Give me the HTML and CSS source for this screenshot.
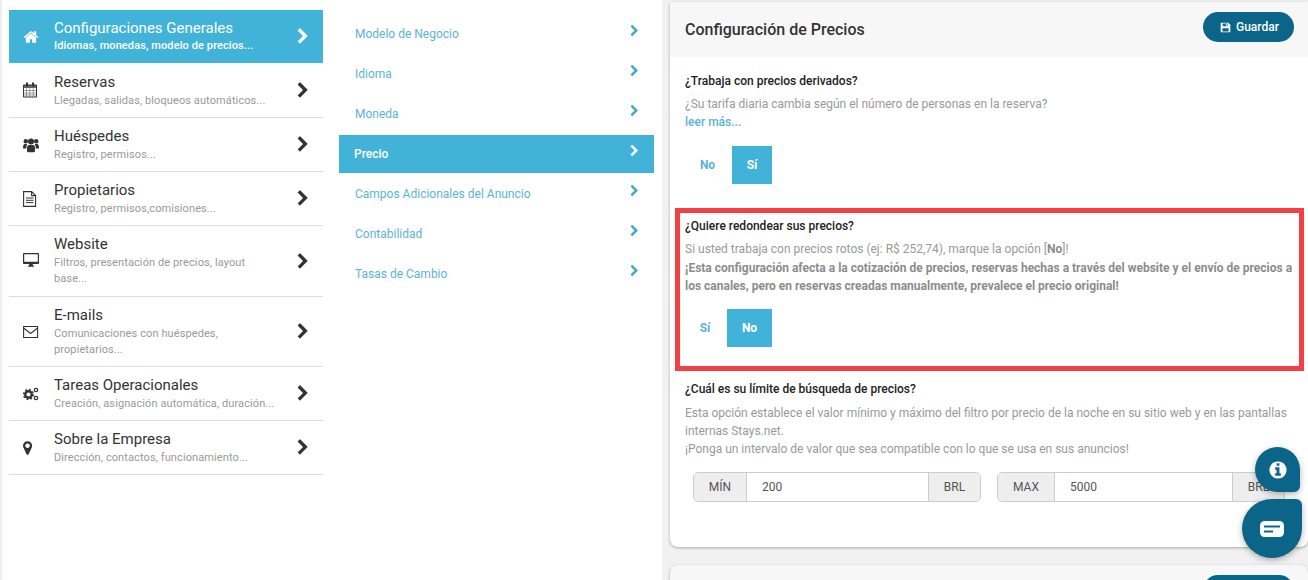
FILE: index.html
```html
<!DOCTYPE html>
<html lang="es">
<head>
<meta charset="utf-8">
<title>Configuración de Precios</title>
<link rel="stylesheet" href="styles.css">
</head>
<body>
<svg class="defs" width="0" height="0">
  <symbol id="chev" viewBox="0 0 1280 1792"><path d="M1107 877l-742 742q-19 19-45 19t-45-19l-166-166q-19-19-19-45t19-45l531-531-531-531q-19-19-19-45t19-45l166-166q19-19 45-19t45 19l742 742q19 19 19 45t-19 45z"/></symbol>
</svg>

<div class="page">
<div class="menus">
  <ul class="mainmenu">
    <li class="on">
      <svg class="ico" viewBox="0 0 1792 1792"><path d="M1472 992v480q0 26-19 45t-45 19h-384v-384h-256v384h-384q-26 0-45-19t-19-45v-480q0-1 .5-3t.5-3l575-474 575 474q1 2 1 6zm223-69l-62 74q-8 9-21 11h-3q-13 0-21-7l-692-577-692 577q-12 8-24 7-13-2-21-11l-62-74q-8-10-7-23.500t11-21.500l719-599q32-26 76-26t76 26l244 204v-195q0-14 9-23t23-9h192q14 0 23 9t9 23v408l219 182q10 8 11 21.500t-7 23.500z"/></svg>
      <div class="txt"><b>Configuraciones Generales</b><span>Idiomas, monedas, modelo de precios...</span></div>
      <svg class="chev"><use href="#chev"/></svg>
    </li>
    <li>
      <svg class="ico" viewBox="0 0 16 16"><path d="M.5 3h13v12H.5z" fill="none" stroke="#333" stroke-width="1"/><path d="M.5 3h13v3H.5z" fill-opacity=".75"/><path d="M3 .5h2v4H3zM9 .5h2v4H9z"/><path d="M.5 8.500h13M.5 11h13M.5 13h13M3.500 6v9M6.800 6v9M10.200 6v9" fill="none" stroke="#554466" stroke-width=".5"/></svg>
      <div class="txt"><b>Reservas</b><span>Llegadas, salidas, bloqueos automáticos...</span></div>
      <svg class="chev"><use href="#chev"/></svg>
    </li>
    <li>
      <svg class="ico" viewBox="0 0 16 16"><circle cx="2.800" cy="4.200" r="2.200"/><circle cx="13.200" cy="4.200" r="2.200"/><circle cx="8" cy="4.500" r="3"/><path d="M0 10.500q0-3.500 2-3.500h2.200q-1 1.500-1 4.500H0zM16 10.500q0-3.500-2-3.500h-2.200q1 1.500 1 4.500H16zM4 14.200v-3.200q0-3 2.300-3h3.400q2.300 0 2.300 3v3.200q0 1-1.200 1H5.200q-1.200 0-1.200-1z"/></svg>
      <div class="txt"><b>Huéspedes</b><span>Registro, permisos...</span></div>
      <svg class="chev"><use href="#chev"/></svg>
    </li>
    <li>
      <svg class="ico" viewBox="0 0 16 16"><path d="M.6 .6h8l4 4v10.800H.6z M8.600 .6v4h4" fill="none" stroke="#333" stroke-width="1.100"/><path d="M3 7h7.500M3 9.300h7.500M3 11.600h7.500" fill="none" stroke="#333"/></svg>
      <div class="txt"><b>Propietarios</b><span>Registro, permisos,comisiones...</span></div>
      <svg class="chev"><use href="#chev"/></svg>
    </li>
    <li class="two">
      <svg class="ico" viewBox="0 0 16 16"><path fill-rule="evenodd" d="M1 0h14q1 0 1 1v9q0 1-1 1H1q-1 0-1-1V1q0-1 1-1zm.2 1.200v7.600h13.600V1.200z"/><path d="M6.300 11h3.400l.4 1.800h1v1H4.900v-1h1z"/></svg>
      <div class="txt"><b>Website</b><span>Filtros, presentación de precios, layout base...</span></div>
      <svg class="chev"><use href="#chev"/></svg>
    </li>
    <li class="two">
      <svg class="ico" viewBox="0 0 16 16"><path d="M.6 2.500h14v11H.6z M.6 4l7 5.500L14.600 4" fill="none" stroke="#333" stroke-width="1.100"/></svg>
      <div class="txt"><b>E-mails</b><span>Comunicaciones con huéspedes, propietarios...</span></div>
      <svg class="chev"><use href="#chev"/></svg>
    </li>
    <li>
      <svg class="ico" viewBox="0 0 16 16"><circle cx="5.500" cy="8.500" r="3.300" fill="none" stroke="#333" stroke-width="2.400"/><circle cx="5.500" cy="8.500" r="5" fill="none" stroke="#333" stroke-width="1.400" stroke-dasharray="1.800 2.100"/><circle cx="13" cy="4" r="1.700" fill="none" stroke="#333" stroke-width="1.200"/><circle cx="13" cy="12" r="1.700" fill="none" stroke="#333" stroke-width="1.200"/></svg>
      <div class="txt"><b>Tareas Operacionales</b><span>Creación, asignación automática, duración...</span></div>
      <svg class="chev"><use href="#chev"/></svg>
    </li>
    <li>
      <svg class="ico" viewBox="0 0 1792 1792"><path d="M768 640q0-106-75-181t-181-75-181 75-75 181 75 181 181 75 181-75 75-181zm256 0q0 109-33 179l-364 774q-16 33-47.500 52t-67.500 19-67.500-19-46.500-52l-365-774q-33-70-33-179 0-212 150-362t362-150 362 150 150 362z"/></svg>
      <div class="txt"><b>Sobre la Empresa</b><span>Dirección, contactos, funcionamiento...</span></div>
      <svg class="chev"><use href="#chev"/></svg>
    </li>
  </ul>

  <ul class="submenu">
    <li>Modelo de Negocio<svg class="chev"><use href="#chev"/></svg></li>
    <li>Idioma<svg class="chev"><use href="#chev"/></svg></li>
    <li>Moneda<svg class="chev"><use href="#chev"/></svg></li>
    <li class="on">Precio<svg class="chev"><use href="#chev"/></svg></li>
    <li>Campos Adicionales del Anuncio<svg class="chev"><use href="#chev"/></svg></li>
    <li>Contabilidad<svg class="chev"><use href="#chev"/></svg></li>
    <li>Tasas de Cambio<svg class="chev"><use href="#chev"/></svg></li>
  </ul>
</div>

<div class="content">
  <div class="card">
    <div class="card-head">
      <h2>Configuración de Precios</h2>
      <a class="save">
        <svg viewBox="0 0 16 16"><path fill-rule="evenodd" d="M2 1h10l3 3v10q0 1-1 1H2q-1 0-1-1V2q0-1 1-1zm2 1.300V6h7V2.300zM3.500 9v4.700h9V9z"/><path d="M8.500 2.800h1.500v2.500H8.500z"/></svg>
        Guardar
      </a>
    </div>
    <div class="card-body">
      <section class="opt opt-first">
        <h3>¿Trabaja con precios derivados?</h3>
        <p>¿Su tarifa diaria cambia según el número de personas en la reserva?<br><a class="more">leer más...</a></p>
        <div class="toggle"><span class="no-first">No</span><span class="sel si-sel">Sí</span></div>
      </section>

      <section class="opt opt-round">
        <h3>¿Quiere redondear sus precios?</h3>
        <p>Si usted trabaja con precios rotos (ej: R$ 252,74), marque la opción [<strong>No</strong>]!<br>
        <strong>¡Esta configuración afecta a la cotización de precios, reservas hechas a través del website y el envío de precios a los canales, pero en reservas creadas manualmente, prevalece el precio original!</strong></p>
        <div class="toggle"><span class="si-first">Sí</span><span class="sel no-sel">No</span></div>
      </section>

      <section class="opt opt-limit">
        <h3>¿Cuál es su límite de búsqueda de precios?</h3>
        <p>Esta opción establece el valor mínimo y máximo del filtro por precio de la noche en su sitio web y en las pantallas internas Stays.net.<br>
        ¡Ponga un intervalo de valor que sea compatible con lo que se usa en sus anuncios!</p>
        <div class="ranges">
          <div class="range"><span class="addon lab">MÍN</span><span class="val">200</span><span class="addon cur">BRL</span></div>
          <div class="range"><span class="addon lab lab-max">MAX</span><span class="val">5000</span><span class="addon cur">BRL</span></div>
        </div>
      </section>
    </div>
  </div>

  <div class="card card-next">
    <a class="save save-next"></a>
  </div>
</div>
</div>

<div class="redbox"></div>

<a class="fab fab-info">
  <svg viewBox="0 0 1536 1792"><path fill="#fff" d="M1024 1376v-160q0-14-9-23t-23-9h-96v-512q0-14-9-23t-23-9h-320q-14 0-23 9t-9 23v160q0 14 9 23t23 9h96v320h-96q-14 0-23 9t-9 23v160q0 14 9 23t23 9h448q14 0 23-9t9-23zm-128-896v-160q0-14-9-23t-23-9h-192q-14 0-23 9t-9 23v160q0 14 9 23t23 9h192q14 0 23-9t9-23zm640 416q0 209-103 385.500t-279.500 279.500-385.500 103-385.500-103-279.500-279.500-103-385.500 103-385.500 279.500-279.500 385.500-103 385.500 103 279.500 279.500 103 385.500z"/></svg>
</a>
<a class="fab fab-chat">
  <svg viewBox="0 0 24 16"><path fill="#fff" fill-rule="evenodd" d="M5 0h14q5 0 5 5v6q0 5-5 5H5q-5 0-5-5V5q0-5 5-5zm-1 4.500v2h16v-2zm0 5v2h9v-2z"/></svg>
</a>
</body>
</html>
```

FILE: styles.css
```css
* { box-sizing: border-box; }
html, body { margin: 0; height: 580px; overflow: hidden; }
body { font: 12px/18px Roboto, sans-serif; color: #999; background: #fff; }
.defs { position: absolute; }
ul { list-style: none; margin: 0; padding: 0; }

.page { display: flex; height: 580px; border-left: 2px solid #eee; }
.menus { display: flex; width: 660px; flex: none; padding: 10px 8px 0 7px; }

/* left menu */
.mainmenu { width: 314px; flex: none; }
.mainmenu li { display: flex; align-items: center; height: 54px; padding: 0 14px; border-bottom: 1px solid #ddd; color: #333; }
.mainmenu li.two { height: 71px; }
.mainmenu li:nth-child(2) { height: 55px; }
.mainmenu li:nth-child(6) { height: 70px; }
.mainmenu li.on { height: 53px; background: #42b3d8; border-bottom: 0; color: #fff; fill: #fff; }
.ico { width: 16px; height: 16px; flex: none; fill: #333; }
.on .ico { fill: #fff; }
.txt { flex: 1; padding: 0 21px 0 15px; }
.txt b { display: block; font-weight: 400; font-size: 15px; line-height: 20px; margin-bottom: 1px; }
.txt span { display: block; font-size: 11px; line-height: 16px; color: #999; letter-spacing: .1px; }
.two .txt { margin-top: -1px; }
.on .txt { margin-top: -2px; }
.on .txt b { margin-bottom: 0; }
.on .txt span { color: #fff; font-weight: 500; }
.chev { width: 12px; height: 17px; flex: none; fill: #333; }
.on .chev { fill: #fff; }

/* middle menu */
.submenu { flex: 1; margin-left: 16px; padding-top: 5px; }
.submenu li { display: flex; justify-content: space-between; align-items: center; height: 38px; margin-bottom: 2px; padding: 0 15px 0 16px; color: #5cb3d6; }
.submenu li.on { padding-left: 15px; background: #42b3d8; color: #fff; font-weight: 500; }
.submenu .chev { width: 9px; height: 14px; fill: #42a7cc; margin-top: -6px; }
.submenu .on .chev { fill: #fff; }

/* right side */
.content { flex: 1; background: #f1f1f1; padding: 2px 0 0 8px; }
.card { background: #fff; border-radius: 0 0 8px 8px; box-shadow: 0 1px 3px rgba(0,0,0,.3); height: 545px; }
.card-head { display: flex; justify-content: space-between; height: 55px; padding: 10px 14px 0 15px; background: #f7f7f7; }
h2 { margin: 8px 0 0; font-size: 16px; line-height: 20px; font-weight: 500; color: #333; }
.save { display: flex; align-items: center; gap: 5px; height: 30px; width: 91px; padding-left: 17px; border-radius: 15px; background: #0b6588; color: #fff; font-weight: 500; }
.save svg { width: 11px; height: 11px; fill: #fff; }

.card-body { padding: 15px 15px 0; }
.opt h3 { margin: 0 0 5px; font-size: 12px; line-height: 18px; font-weight: 500; color: #222; }
.opt p { margin: 0; }
.opt strong { font-weight: 700; color: #8c8c8c; }
.more { color: #5cb3d6; font-weight: 500; }
.toggle { display: flex; margin-top: 15px; height: 38px; font-weight: 700; color: #5cb3d6; }
.toggle span { display: flex; align-items: center; justify-content: center; }
.toggle .sel { background: #42b3d8; color: #fff; }
.no-first { width: 45px; margin-right: 2px; }
.si-sel { width: 40px; }
.si-first { width: 40px; margin-right: 2px; }
.no-sel { width: 45px; }
.opt-round { margin-top: 33px; }
.opt-round p { line-height: 18.5px; }
.opt-round .toggle { margin-top: 13.5px; }
.opt-limit { margin-top: 33px; }
.opt-limit h3 { margin-bottom: 6px; }

.ranges { display: flex; gap: 16px; margin: 14px 0 0 8px; }
.range { display: flex; width: 288px; height: 30px; border: 1px solid #ccc; border-radius: 5px; color: #555; line-height: 28px; overflow: hidden; }
.addon { background: #eee; text-align: center; }
.lab { width: 53px; border-right: 1px solid #ccc; }
.lab-max { width: 57px; }
.cur { width: 52px; border-left: 1px solid #ccc; }
.val { flex: 1; padding-left: 15px; }

.card-next { height: 60px; margin-top: 18px; background: #f7f7f7; border-radius: 8px 8px 0 0; display: flex; justify-content: flex-end; padding: 10px 14px 0 0; }
.save-next { padding: 0; }

/* annotation drawn over the page */
.redbox { position: absolute; left: 675px; top: 208px; width: 629px; height: 163px; border: 5px solid #f34045; }

/* floating buttons */
.fab { position: fixed; display: flex; align-items: center; justify-content: center; background: #0b6588; box-shadow: 0 2px 6px rgba(0,0,0,.3); }
.fab-info { left: 1255px; top: 447px; width: 45px; height: 45px; border-radius: 50% 50% 6px 50%; }
.fab-info svg { width: 18px; height: 20px; }
.fab-chat { left: 1242px; top: 499px; width: 60px; height: 59px; border-radius: 50% 6px 50% 50%; }
.fab-chat svg { width: 24px; height: 16px; }
```
